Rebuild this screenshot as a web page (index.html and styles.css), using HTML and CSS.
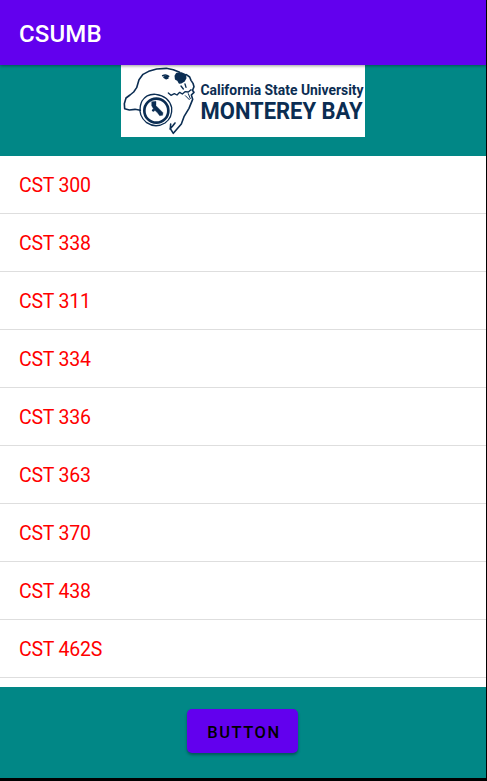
FILE: index.html
```html
<!DOCTYPE html>
<html lang="en">
<head>
<meta charset="utf-8">
<title>CSUMB</title>
<link rel="stylesheet" href="styles.css">
</head>
<body>
<div class="screen">
  <header class="appbar">CSUMB</header>
  <section class="banner">
    <svg class="logo" viewBox="121 65 244 72" role="img" aria-label="California State University Monterey Bay">
      <g transform="translate(115 60) scale(.33333)" fill="none" stroke="#0b2d52" stroke-width="4.8" stroke-linejoin="round" stroke-linecap="round">
        <path d="M76 151l-16-3-17 2-14-4-1-15 5-17 12-9 11-9 9-13 7-24 12-16 17-9 24-7 29-2 21 4 19 8"/>
        <path d="M214 44l10 7 4 10 6 9 3 10-4 10"/>
        <path d="M143 47q10-5 18 2M150 51l8 3"/>
        <path d="M160 99l8 7 10-5 8 4 8-8 8 5 8-7 10 1 8-7M205 87l-7-9M213 82l-3-10" stroke-width="4"/>
        <path d="M232 91l5 6-8 8 4 13-11 27-15 25-8 22-24 28-9-14 1-14M165 207l8-9 7-9"/>
        <path d="M211 107l12 12M220 101l6 15" stroke-width="3"/>
        <path d="M181 48l4-7 14-2 12 5 1 10-5 9-8 5-6 1-4-8-7-4z" fill="#0b2d52"/>
        <path d="M147 52l9-4 2 6-5 2z" fill="#0b2d52"/>
        <path d="M81 123q14-22 41-20 40 5 48 40 3 30-20 46-28 17-55-1-25-20-19-50 2-9 5-15z" stroke-width="4"/>
        <circle cx="124" cy="152" r="36" stroke-width="8"/>
        <path d="M110 125l13-1v13l21 21-1 8-9 1-8-10-10-9-6-11z" fill="#0b2d52" stroke-width="1"/>
        <circle cx="115" cy="151" r="4" fill="#0b2d52" stroke="none"/>
      </g>
      <text class="logo-small" x="200.5" y="95" textLength="163" lengthAdjust="spacingAndGlyphs">California State University</text>
      <text class="logo-large" x="200.5" y="118.8" textLength="162" lengthAdjust="spacingAndGlyphs">MONTEREY BAY</text>
    </svg>
  </section>
  <ul class="courses">
    <li>CST 300</li>
    <li>CST 338</li>
    <li>CST 311</li>
    <li>CST 334</li>
    <li>CST 336</li>
    <li>CST 363</li>
    <li>CST 370</li>
    <li>CST 438</li>
    <li>CST 462S</li>
  </ul>
  <footer class="actions"><button class="button">BUTTON</button></footer>
</div>
</body>
</html>
```
FILE: styles.css
```css
* { box-sizing: border-box; }
body { margin: 0; background: #000; font-family: Roboto, sans-serif; }
.screen {
  width: 486px;
  height: 778px;
  display: flex;
  flex-direction: column;
  overflow: hidden;
  background: #fff;
}
.appbar {
  height: 65px;
  flex: none;
  padding: 3px 19px 0;
  display: flex;
  align-items: center;
  background: #6200ee;
  color: #fff;
  font-size: 24px;
  font-weight: 500;
  letter-spacing: .15px;
  position: relative;
  box-shadow: 0 1px 3px rgba(0, 0, 0, .4);
}
.banner {
  height: 91px;
  flex: none;
  display: flex;
  justify-content: center;
  align-items: flex-start;
  background: #018786;
}
.logo { width: 244px; height: 72px; background: #fff; }
.logo text { fill: #0b2d52; font-family: Roboto, sans-serif; font-weight: 700; }
.logo .logo-small { font-size: 14.3px; }
.logo .logo-large { font-size: 23.4px; }
.courses {
  flex: 1;
  min-height: 0;
  margin: 0;
  padding: 0;
  list-style: none;
}
.courses li {
  height: 58px;
  padding: 1px 19px 0;
  display: flex;
  align-items: center;
  border-bottom: 1px solid #dedede;
  color: #f00;
  font-size: 19.5px;
  line-height: 23px;
  letter-spacing: -.2px;
}
.actions {
  height: 91px;
  flex: none;
  display: flex;
  justify-content: center;
  align-items: flex-start;
  padding: 22px 1px 0 0;
  background: #018786;
}
.button {
  width: 111px;
  height: 44px;
  padding: 2px 0 0 3px;
  border: 0;
  border-radius: 5px;
  background: #6200ee;
  color: #000;
  font: 500 16.5px Roboto, sans-serif;
  letter-spacing: 1.5px;
  box-shadow: 0 2px 3px rgba(0, 0, 0, .35);
}
```
